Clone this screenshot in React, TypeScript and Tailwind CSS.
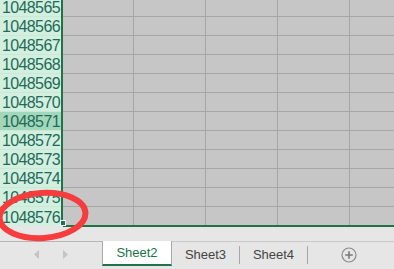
import React from 'react';

const rows = [1048565, 1048566, 1048567, 1048568, 1048569, 1048570, 1048571, 1048572, 1048573, 1048574, 1048575, 1048576];

export default function App() {
  return (
    <div className="relative w-[394px] h-[269px] overflow-hidden bg-[#e6e6e6] font-['Liberation_Sans',Arial,sans-serif]">
      {/* Sheet grid */}
      <div className="h-[227px] overflow-hidden">
        <div className="flex -mt-[2px]">
          {/* Row headers (selected column) */}
          <div className="w-[61px] flex flex-col">
            {rows.map((r, i) => (
              <div
                key={r}
                className={`h-[19px] flex items-center justify-end pr-[1px] pt-[2px] text-[16px] tracking-[-0.6px] leading-none text-[#1f6b58] ${
                  r === 1048571 ? 'bg-[#a3d7bb]' : 'bg-[#d3efdf]'
                } ${i === rows.length - 1 ? 'h-[18px]' : 'border-b border-[#c9e9d7]'}`}
              >
                {r}
              </div>
            ))}
          </div>
          <div className="w-[2px] h-[225px] bg-[#217346]" />
          {/* Cells */}
          <div className="flex-1 flex flex-col bg-[#c6c6c6]">
            {rows.map((r, i) => (
              <div
                key={r}
                className={`grid grid-cols-[71px_72px_72px_72px_1fr] ${
                  i === rows.length - 1 ? 'h-[20px] border-b-2 border-[#217346]' : 'h-[19px] border-b border-[#a6a6a6]'
                }`}
              >
                <div className="border-r border-[#a6a6a6]" />
                <div className="border-r border-[#a6a6a6]" />
                <div className="border-r border-[#a6a6a6]" />
                <div className="border-r border-[#a6a6a6]" />
                <div />
              </div>
            ))}
          </div>
        </div>
      </div>

      {/* Sheet tabs */}
      <div className="flex items-start pt-[14px] h-[42px]">
        <div className="w-[102px] h-[28px] border-t border-[#b5b5b5] flex items-center justify-center gap-[22px] pb-[3px]">
          <svg width="6" height="9" viewBox="0 0 6 9"><path d="M5 0 L0 4.5 L5 9 Z" fill="#c4c4c4" /></svg>
          <svg width="6" height="9" viewBox="0 0 6 9"><path d="M1 0 L6 4.5 L1 9 Z" fill="#c4c4c4" /></svg>
        </div>
        <div className="w-[70px] h-[25px] bg-white border-x border-[#a9a9a9] border-b-2 border-b-[#217346] flex items-center justify-center text-[13px] text-[#217346]">
          Sheet2
        </div>
        <div className="flex-1 h-[28px] border-t border-[#c9c9c9] flex items-start pt-[4px] text-[13px] text-[#444444]">
          <div className="w-[68px] h-[18px] flex items-center justify-center border-r border-[#a6a6a6]">Sheet3</div>
          <div className="w-[68px] h-[18px] flex items-center justify-center border-r border-[#a6a6a6]">Sheet4</div>
          <div className="ml-[33px] h-[18px] flex items-center">
            <svg width="16" height="16" viewBox="0 0 16 16">
              <circle cx="8" cy="8" r="7" fill="none" stroke="#8a8a8a" strokeWidth="1.2" />
              <path d="M8 4.2 V11.8 M4.2 8 H11.8" stroke="#7a7a7a" strokeWidth="1.6" />
            </svg>
          </div>
        </div>
      </div>

      {/* Fill handle */}
      <div className="absolute left-[60px] top-[220px] w-[6px] h-[6px] bg-[#217346] border border-white" />

      {/* Red annotation ellipse */}
      <svg className="absolute left-0 top-[185px] pointer-events-none" width="100" height="60" viewBox="0 0 100 60">
        <ellipse cx="42.5" cy="30.5" rx="43" ry="22.5" fill="none" stroke="#f63c3c" strokeWidth="6" transform="rotate(-4 42.5 30.5)" />
      </svg>
    </div>
  );
}
